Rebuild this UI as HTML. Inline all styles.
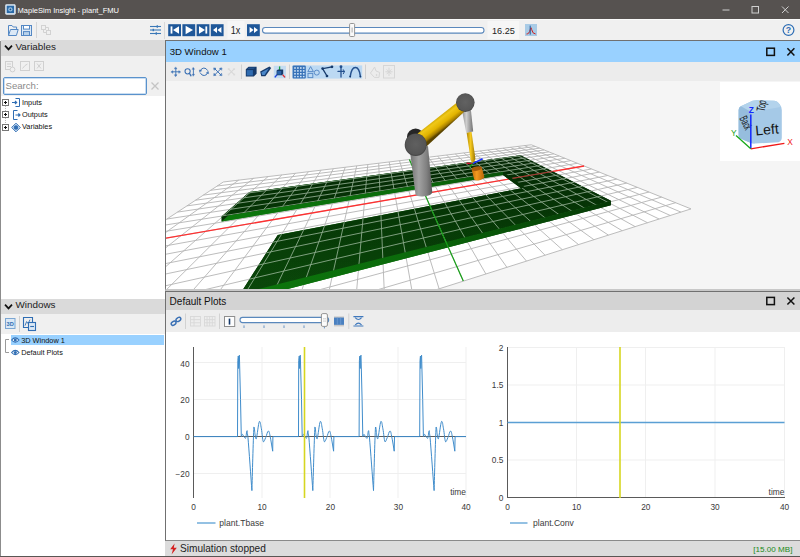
<!DOCTYPE html>
<html><head><meta charset="utf-8"><title>MapleSim Insight - plant_FMU</title>
<style>
html,body{margin:0;padding:0;}
body{width:800px;height:557px;overflow:hidden;background:#f0f0f0;font-family:"Liberation Sans",sans-serif;color:#222;position:relative;}
.abs{position:absolute;}
.t{position:absolute;white-space:nowrap;line-height:1;}
#titlebar{left:0;top:0;width:800px;height:19px;background:#565250;}
#titlebar .t{color:#fff;font-size:7.55px;left:17.5px;top:6.6px;}
#toolbar{left:0;top:19px;width:800px;height:22px;background:#f0f0f0;border-top:1px solid #fafafa;box-sizing:border-box;}
#leftpane{left:0;top:41px;width:165px;height:516px;background:#fff;border-left:1px solid #8c8c8c;box-sizing:border-box;}
.hdr{left:1px;width:164px;height:16px;background:#dadada;}
.hdr .t{font-size:9.9px;left:14.5px;top:1.6px;color:#222;}
.row{left:1px;width:164px;background:#f0f0f0;}
.sep{position:absolute;width:1px;background:#cfcfcf;}
.pb{position:absolute;top:24px;width:13px;height:12px;background:#1e5799;}
.win{box-sizing:border-box;border:1px solid #707070;border-right:none;}
.tree{font-size:7.35px;color:#111;}
</style></head><body>
<!-- title bar -->
<div id="titlebar" class="abs">
<svg class="abs" style="left:5.2px;top:4.2px" width="10.8" height="10.8" viewBox="0 0 13 13"><rect x="0.5" y="0.5" width="12" height="12" rx="1.5" fill="#e8eef4" stroke="#c8d4e0"/><rect x="2" y="2" width="9" height="9" fill="#2a6aa8"/><circle cx="6.5" cy="6.5" r="2.6" fill="#9cc4e4"/><circle cx="6.5" cy="6.5" r="1.1" fill="#1d4f86"/></svg>
<span class="t">MapleSim Insight - plant_FMU</span>
<svg class="abs" style="left:716px;top:0" width="84" height="19" viewBox="716 0 84 19"><g stroke="#cfcfcf" stroke-width="1" fill="none"><line x1="722.5" y1="10" x2="729.5" y2="10"/><rect x="752" y="6.5" width="6.5" height="6.5"/><path d="M782,6.5 L788.5,13 M788.5,6.5 L782,13"/></g></svg>
</div>
<!-- main toolbar -->
<div id="toolbar" class="abs"></div>
<svg class="abs" style="left:0;top:20px" width="165" height="20" viewBox="0 20 165 20">
<g fill="none" stroke="#5488c4" stroke-width="1">
<path d="M8.5,35.5 L8.5,25.5 L12,25.5 L13.2,27 L16.6,27 L16.6,29"/><path d="M8.5,35.5 L10.5,29.5 L18.2,29.5 L16.4,35.5 Z" fill="#dce9f6"/>
<rect x="21.5" y="25.5" width="10" height="10" fill="#dce9f6"/><rect x="23.5" y="25.5" width="6" height="3.6" fill="#fff"/><rect x="23.5" y="31.6" width="6" height="3.9" fill="#b9d2ea"/>
</g>
<line x1="36.5" y1="22" x2="36.5" y2="38" stroke="#d6d6d6"/>
<g fill="none" stroke="#d2d2d2" stroke-width="1"><rect x="41.5" y="25.5" width="4" height="4"/><rect x="46.5" y="30.5" width="4" height="4"/><path d="M45.5,27.5 H48.5 V30.5 M46.5,32.5 H43.5 V29.5"/></g>
<g stroke="#3a78b8" stroke-width="1.1" fill="#3a78b8"><line x1="150" y1="26.5" x2="161" y2="26.5"/><line x1="150" y1="30" x2="161" y2="30"/><line x1="150" y1="33.5" x2="161" y2="33.5"/><rect x="156.6" y="25.3" width="1.4" height="2.4" stroke="none"/><rect x="152.6" y="28.8" width="1.4" height="2.4" stroke="none"/><rect x="155.6" y="32.3" width="1.4" height="2.4" stroke="none"/></g>
</svg>
<div class="sep" style="left:164px;top:22px;height:17px;background:#d8d8d8"></div>
<!-- playback -->
<svg class="abs" style="left:166px;top:20px" width="634" height="20" viewBox="166 20 634 20">
<g fill="#1e5799"><rect x="168.2" y="24.2" width="12.8" height="12"/><rect x="182.4" y="24.2" width="12.8" height="12"/><rect x="196.6" y="24.2" width="12.8" height="12"/><rect x="210.8" y="24.2" width="12.8" height="12"/><rect x="247" y="24.2" width="12.8" height="12"/></g>
<g fill="#fff"><rect x="170.6" y="26.4" width="1.8" height="7.2"/><path d="M179,26.2 L173,30 L179,33.8 Z"/>
<path d="M185.6,25.8 L193,30 L185.6,34.2 Z"/>
<path d="M199,26.2 L205,30 L199,33.8 Z"/><rect x="205.4" y="26.4" width="1.8" height="7.2"/>
<path d="M217,27 L213,30 L217,33 Z M221.4,27 L217.4,30 L221.4,33 Z"/>
<path d="M249.6,27 L253.6,30 L249.6,33 Z M254,27 L258,30 L254,33 Z"/></g>
<rect x="227.5" y="21" width="17" height="18" fill="#f6f6f6"/>
<text x="235.6" y="33.6" font-size="10.2" textLength="9.6" lengthAdjust="spacingAndGlyphs" text-anchor="middle" fill="#222" font-family="Liberation Sans, sans-serif">1x</text>
<rect x="262.5" y="27.5" width="221.5" height="5.6" rx="2.8" fill="#fff" stroke="#5a88bc" stroke-width="1.1"/>
<rect x="349.6" y="23.5" width="5" height="13" rx="1" fill="#fafafa" stroke="#8a8a8a" stroke-width="0.9"/><line x1="352.1" y1="27.5" x2="352.1" y2="32.5" stroke="#9a9a9a" stroke-width="0.8"/>
<rect x="487.5" y="21" width="31.5" height="18" fill="#f6f6f6"/>
<text x="503.4" y="33.5" font-size="9.9" textLength="22.8" lengthAdjust="spacingAndGlyphs" text-anchor="middle" fill="#222" font-family="Liberation Sans, sans-serif">16.25</text>
<rect x="525" y="24" width="12" height="12" fill="#a9cbe6"/><path d="M526.5,34 Q529.4,34 530.3,29.4 Q531,26 531.6,29.4 Q532.6,34 535.6,34" fill="none" stroke="#d02020" stroke-width="1"/><line x1="530.2" y1="25.6" x2="530.2" y2="34.6" stroke="#1e5799" stroke-width="1"/>
<circle cx="788.5" cy="30" r="5.4" fill="none" stroke="#2d6db4" stroke-width="1.2"/>
<text x="788.5" y="33.2" font-size="8.8" font-weight="bold" text-anchor="middle" fill="#2d6db4" font-family="Liberation Sans, sans-serif">?</text>
</svg>

<!-- left pane -->
<div id="leftpane" class="abs"></div>
<div class="abs hdr" style="top:40px"><svg class="abs" style="left:3px;top:4px" width="9" height="8" viewBox="0 0 9 8"><path d="M1,1.6 L4.5,5.4 L8,1.6" fill="none" stroke="#111" stroke-width="1.7"/></svg><span class="t">Variables</span></div>
<div class="abs row" style="top:56px;height:40px"></div>
<svg class="abs" style="left:1px;top:57px" width="164" height="18" viewBox="1 57 164 18"><g fill="none" stroke="#d0d0d0" stroke-width="1"><rect x="5.5" y="61.5" width="7" height="8"/><path d="M7,64 H11 M7,66.5 H11"/><circle cx="12.5" cy="69.5" r="2.4" fill="#f0f0f0"/><rect x="20.5" y="61.5" width="9" height="9"/><path d="M22.5,68.5 L25,65.5 L27.5,64"/><rect x="34.5" y="61.5" width="9" height="9"/><path d="M37,63.5 L41,68.5 M41,63.5 L37,68.5"/></g></svg>
<div class="abs" style="left:3px;top:77px;width:143.5px;height:17.5px;box-sizing:border-box;border:1px solid #5a92cc;border-radius:2px;background:#fff;box-shadow:inset 0 0 0 1px #c9ddf1"></div>
<span class="t" style="left:5.5px;top:81px;font-size:9.6px;color:#8a8a8a">Search:</span>
<svg class="abs" style="left:150px;top:81px" width="10" height="10" viewBox="0 0 10 10"><path d="M1.5,1.5 L8.5,8.5 M8.5,1.5 L1.5,8.5" stroke="#c4c4c4" stroke-width="1.3" fill="none"/></svg>
<!-- tree -->
<svg class="abs" style="left:1px;top:98px" width="60" height="36" viewBox="1 98 60 36">
<path d="M5.5,104 V127" stroke="#bbb" stroke-dasharray="1 1" fill="none"/>
<g fill="#fff" stroke="#777" stroke-width="1"><rect x="2.5" y="99.5" width="6" height="6"/><rect x="2.5" y="111.5" width="6" height="6"/><rect x="2.5" y="124.5" width="6" height="6"/></g>
<g stroke="#111" stroke-width="1" fill="none"><path d="M4,102.5 H7 M5.5,101 V104 M4,114.5 H7 M5.5,113 V116 M4,127.5 H7 M5.5,126 V129"/></g>
<g fill="none" stroke="#2f6db3" stroke-width="1"><path d="M15.5,98.5 H19.5 V106.5 H15.5"/><path d="M12,102.5 H16.5 M15,101 L16.6,102.5 L15,104" stroke-width="1.2"/>
<path d="M17.5,110.5 H13.5 V119.5 H17.5"/><path d="M15.5,115 H20 M18.4,113.5 L20,115 L18.4,116.5" stroke-width="1.2"/>
<path d="M16,123.2 L20.3,127.5 L16,131.8 L11.7,127.5 Z" fill="#d6e6f6"/><circle cx="16" cy="127.5" r="1.8" fill="#2f6db3"/></g>
</svg>
<span class="t tree" style="left:22px;top:98.6px">Inputs</span>
<span class="t tree" style="left:22px;top:111.1px">Outputs</span>
<span class="t tree" style="left:22px;top:123.1px">Variables</span>

<div class="abs hdr" style="top:298.5px;height:15.5px"><svg class="abs" style="left:3px;top:4px" width="9" height="8" viewBox="0 0 9 8"><path d="M1,1.6 L4.5,5.4 L8,1.6" fill="none" stroke="#111" stroke-width="1.7"/></svg><span class="t">Windows</span></div>
<div class="abs row" style="top:314px;height:20px"></div>
<svg class="abs" style="left:1px;top:314px" width="60" height="20" viewBox="1 314 60 20">
<rect x="5.5" y="318.5" width="9.5" height="10" fill="#dbe8f5" stroke="#7ba6d2"/><text x="10.2" y="326" font-size="5.6" font-weight="bold" text-anchor="middle" fill="#2f6db3" font-family="Liberation Sans, sans-serif">3D</text>
<line x1="19.5" y1="316" x2="19.5" y2="332" stroke="#d0d0d0"/>
<g fill="none" stroke="#2f6db3" stroke-width="1.1"><path d="M28.5,327.5 H23.5 V317.5 H32.5 V322"/><path d="M25,325.6 L26.6,321.6 L28.2,323.6 L30,319.6" stroke-width="0.9"/><rect x="28.5" y="322.5" width="7" height="8" fill="#dbe8f5"/><path d="M30.2,326.5 H34"/></g>
</svg>
<div class="abs" style="left:11px;top:335px;width:153px;height:10px;background:#99d1ff"></div>
<svg class="abs" style="left:1px;top:334px" width="22" height="24" viewBox="1 334 22 24">
<path d="M5.5,339.5 H9 M5.5,339.5 V352.5 H9" stroke="#9a9a9a" fill="none"/>
<g fill="#fff" stroke="#2f6db3" stroke-width="1.1"><path d="M11.6,340 Q15.3,335.8 19,340 Q15.3,344.2 11.6,340 Z"/><path d="M11.6,352.5 Q15.3,348.3 19,352.5 Q15.3,356.7 11.6,352.5 Z"/></g>
<circle cx="15.3" cy="340" r="1.5" fill="#2f6db3"/><circle cx="15.3" cy="352.5" r="1.5" fill="#2f6db3"/>
</svg>
<span class="t tree" style="left:21.2px;top:336.6px">3D Window 1</span>
<span class="t tree" style="left:21.2px;top:348.5px">Default Plots</span>

<!-- 3D window -->
<div class="abs win" style="left:165px;top:40px;width:635px;height:251px;background:#f5f5f5;border-bottom:3px solid #c8c8c8"></div>
<div class="abs" style="left:166px;top:41px;width:634px;height:21px;background:#99d1ff"></div>
<span class="t" style="left:169.7px;top:46.7px;font-size:9.6px;color:#111">3D Window 1</span>
<svg class="abs" style="left:760px;top:42px" width="40" height="20" viewBox="760 42 40 20"><rect x="766.8" y="48.2" width="7.6" height="7.2" fill="none" stroke="#111" stroke-width="1.5"/><path d="M787.4,48.2 L794.4,55.4 M794.4,48.2 L787.4,55.4" stroke="#111" stroke-width="1.5" fill="none"/></svg>
<div class="abs" style="left:166px;top:62px;width:634px;height:19px;background:#ececec"></div>
<svg class="abs" style="left:166px;top:62px" width="240" height="19" viewBox="166 62 240 19">
<g stroke="#3a70b4" stroke-width="1.05" fill="#3a70b4" stroke-linecap="round">
<!-- move -->
<path d="M172.6,71.8 H179 M175.8,68.6 V75" fill="none" stroke-width="0.9"/>
<path d="M175.8,67.2 L176.9,68.8 L174.7,68.8 Z M175.8,76.4 L176.9,74.8 L174.7,74.8 Z M171.2,71.8 L172.8,70.7 L172.8,72.9 Z M180.4,71.8 L178.8,70.7 L178.8,72.9 Z" stroke-width="0.5"/>
<!-- zoom -->
<circle cx="187.6" cy="71.3" r="2.6" fill="none" stroke-width="1.05"/><path d="M189.5,73.4 L191,75.8" fill="none" stroke-width="1.3"/>
<path d="M193.4,69 V74.6" fill="none" stroke-width="0.9"/><path d="M193.4,67.6 L194.5,69.3 L192.3,69.3 Z M193.4,76 L194.5,74.3 L192.3,74.3 Z" stroke-width="0.4"/>
<!-- rotate -->
<path d="M200.4,70.6 A3.8,3.8 0 0 1 207.4,70.2" fill="none" stroke-width="1"/><path d="M207.6,73 A3.8,3.8 0 0 1 200.6,73.4" fill="none" stroke-width="1"/>
<path d="M199.7,72.2 L199.3,69.9 L201.5,70.6 Z M208.3,71.4 L208.7,73.7 L206.5,73 Z" stroke-width="0.4"/>
<!-- fit -->
<path d="M215,69 L220.6,74.6 M220.6,69 L215,74.6" fill="none" stroke-width="0.95"/>
<path d="M214,68 L216,68.3 L214.3,70 Z M221.6,68 L219.6,68.3 L221.3,70 Z M214,75.6 L216,75.3 L214.3,73.6 Z M221.6,75.6 L219.6,75.3 L221.3,73.6 Z" stroke-width="0.6"/>
</g>
<path d="M228.8,69.2 L234,74.4 M234,69.2 L228.8,74.4" stroke="#d8d8d8" stroke-width="1.1" fill="none"/>
<path d="M228,68.4 l1.5,0.2 l-1.3,1.3 Z M234.8,68.4 l-1.5,0.2 l1.3,1.3 Z M228,75.2 l1.5,-0.2 l-1.3,-1.3 Z M234.8,75.2 l-1.5,-0.2 l1.3,-1.3 Z" fill="#d8d8d8" stroke="#d8d8d8" stroke-width="0.5"/>
<line x1="241.5" y1="64.5" x2="241.5" y2="79" stroke="#d0d0d0"/>
<!-- cube -->
<path d="M245.8,69.2 L248.6,66.8 L256.6,66.8 L256.6,73.8 L253.8,76.4 L245.8,76.4 Z" fill="#163a6b"/>
<rect x="246.7" y="70.1" width="6.2" height="5.4" fill="#2f6bb0"/>
<path d="M247.2,69 L249.2,67.6 L255.4,67.6 L253.6,69 Z" fill="#24528c"/>
<!-- wedge -->
<path d="M260.2,71.4 L269.4,66.6 L271.2,68 L265.4,76.2 L261.2,76.2 Z" fill="#163a6b"/>
<path d="M261.4,72.2 L268.8,68.4 L264.6,75 L262.2,75 Z" fill="#4a86c8"/>
<!-- axes -->
<rect x="273.8" y="65.8" width="12.2" height="12.4" fill="#c4dcf2"/>
<path d="M279.6,70 V66.4" stroke="#18a040" stroke-width="1.3"/><path d="M282.6,74.6 L285,77.4" stroke="#e02828" stroke-width="1.4"/><path d="M277,74.6 L274.8,77.4" stroke="#2040e0" stroke-width="1.4"/>
<path d="M276.6,70.4 L278,69.4 L283.2,69.4 L283.2,74 L281.8,75.2 L276.6,75.2 Z" fill="#163a6b"/><rect x="277.2" y="71" width="4" height="3.6" fill="#2a62a8"/>
<line x1="289.5" y1="64.5" x2="289.5" y2="79" stroke="#d0d0d0"/>
<!-- checked group -->
<rect x="292.4" y="65.4" width="69.8" height="13.2" fill="#bcd9f3"/>
<rect x="292.6" y="65.6" width="13.2" height="12.8" rx="1" fill="#3872b8"/>
<g fill="#cfe3f6"><rect x="294.2" y="67.2" width="1.6" height="1.6"/><rect x="297.1" y="67.2" width="1.6" height="1.6"/><rect x="300" y="67.2" width="1.6" height="1.6"/><rect x="302.9" y="67.2" width="1.6" height="1.6"/>
<rect x="294.2" y="70.1" width="1.6" height="1.6"/><rect x="297.1" y="70.1" width="1.6" height="1.6"/><rect x="300" y="70.1" width="1.6" height="1.6"/><rect x="302.9" y="70.1" width="1.6" height="1.6"/>
<rect x="294.2" y="73" width="1.6" height="1.6"/><rect x="297.1" y="73" width="1.6" height="1.6"/><rect x="300" y="73" width="1.6" height="1.6"/><rect x="302.9" y="73" width="1.6" height="1.6"/>
<rect x="294.2" y="75.9" width="1.6" height="1.4"/><rect x="297.1" y="75.9" width="1.6" height="1.4"/><rect x="300" y="75.9" width="1.6" height="1.4"/><rect x="302.9" y="75.9" width="1.6" height="1.4"/></g>
<g fill="none" stroke="#5a8cc8" stroke-width="1"><path d="M310.6,66.6 L313.4,71.6 L307.8,71.6 Z"/><rect x="308" y="73.4" width="4.8" height="4.2"/><circle cx="316.8" cy="72.6" r="2.5"/></g>
<g stroke="#163a6b" stroke-width="1.3" fill="#163a6b" stroke-linecap="round"><path d="M332,66.8 L322.6,68.6 L327,76" fill="none"/><circle cx="332" cy="66.8" r="0.7"/><circle cx="322.6" cy="68.6" r="0.7"/><circle cx="327" cy="76" r="0.7"/></g>
<g stroke="#24508e" stroke-width="1.3" fill="none" stroke-linecap="round"><path d="M341,66.6 V77"/><path d="M338,71.4 H344.2"/><path d="M343.4,69.6 Q345.8,71.6 343.4,73.8" stroke-width="1"/><circle cx="341" cy="66.8" r="0.8" fill="#24508e"/></g>
<path d="M350.2,76.6 Q351.4,67.4 355.4,67.4 Q359.4,67.4 360.4,76.6" fill="none" stroke="#24508e" stroke-width="1.5" stroke-linecap="round"/><circle cx="350.2" cy="76.6" r="0.9" fill="#163a6b"/><circle cx="360.4" cy="76.6" r="0.9" fill="#163a6b"/>
<line x1="365.5" y1="64.5" x2="365.5" y2="79" stroke="#d0d0d0"/>
<g fill="none" stroke="#d6d6d6" stroke-width="1"><path d="M372,71 L374.6,67 L376,71 L379.6,72.4 L379,77.4 L374.4,77.4 L370.4,73 Z"/><circle cx="376.6" cy="75" r="0.5"/>
<rect x="383.5" y="65.5" width="11" height="12.5"/><path d="M385.4,71.8 H392.6 M389,67.6 V76 M386.6,69.4 L391.4,74.2 M391.4,69.4 L386.6,74.2"/></g>
</svg>
<svg class="abs" style="left:166px;top:81px" width="634" height="208" viewBox="166 81 634 208">
<defs>
<linearGradient id="gtop" gradientUnits="userSpaceOnUse" x1="0" y1="150" x2="0" y2="290"><stop offset="0" stop-color="#052605"/><stop offset="0.5" stop-color="#083a08"/><stop offset="1" stop-color="#0a480a"/></linearGradient>
<linearGradient id="gfront" gradientUnits="userSpaceOnUse" x1="166" y1="0" x2="620" y2="0"><stop offset="0" stop-color="#0d7c0d"/><stop offset="0.55" stop-color="#0b6a0b"/><stop offset="1" stop-color="#063606"/></linearGradient>
<linearGradient id="gry1" x1="0" y1="0" x2="1" y2="0"><stop offset="0" stop-color="#707070"/><stop offset="0.4" stop-color="#a2a2a2"/><stop offset="0.75" stop-color="#808080"/><stop offset="1" stop-color="#5a5a5a"/></linearGradient>
<linearGradient id="gry2" x1="0" y1="0" x2="1" y2="0"><stop offset="0" stop-color="#8a8a8a"/><stop offset="0.4" stop-color="#cfcfcf"/><stop offset="1" stop-color="#707070"/></linearGradient>
<linearGradient id="yel1" gradientUnits="userSpaceOnUse" x1="437" y1="116.8" x2="445.6" y2="128.2"><stop offset="0" stop-color="#c8a000"/><stop offset="0.25" stop-color="#f0c818"/><stop offset="0.6" stop-color="#e2b400"/><stop offset="0.85" stop-color="#a88000"/><stop offset="1" stop-color="#5a4400"/></linearGradient>
<linearGradient id="yel2" x1="0" y1="0" x2="1" y2="0"><stop offset="0" stop-color="#b08800"/><stop offset="0.45" stop-color="#f6ca20"/><stop offset="1" stop-color="#9a7400"/></linearGradient>
<linearGradient id="org" x1="0" y1="0" x2="1" y2="0"><stop offset="0" stop-color="#c06c08"/><stop offset="0.4" stop-color="#f29a20"/><stop offset="1" stop-color="#b86408"/></linearGradient>
<radialGradient id="jnt" cx="0.5" cy="0.48" r="0.55"><stop offset="0" stop-color="#606060"/><stop offset="0.8" stop-color="#555555"/><stop offset="1" stop-color="#363636"/></radialGradient>
<radialGradient id="jnt2" cx="0.5" cy="0.48" r="0.55"><stop offset="0" stop-color="#626262"/><stop offset="0.8" stop-color="#575757"/><stop offset="1" stop-color="#383838"/></radialGradient>
<clipPath id="clipTop"><polygon points="249.5,192.1 520.5,155.3 610.9,200.7 240.4,293.6 277.7,235.0 525.4,187.5 503.0,171.8 221.6,216.5"/></clipPath>
</defs>
<rect x="166" y="81" width="634" height="208" fill="#f5f5f5"/>
<polygon points="223.3,182.0 531.3,144.8 691.0,208.9 -292.8,521.0" fill="#ffffff"/><g stroke="#b4b4b4" stroke-width="0.9" opacity="1"><line x1="223.3" y1="182.0" x2="-292.8" y2="521.0"/><line x1="238.7" y1="180.1" x2="-191.7" y2="488.9"/><line x1="253.6" y1="178.3" x2="-104.2" y2="461.2"/><line x1="268.0" y1="176.6" x2="-27.6" y2="436.9"/><line x1="281.9" y1="174.9" x2="39.9" y2="415.5"/><line x1="295.4" y1="173.3" x2="99.9" y2="396.4"/><line x1="308.4" y1="171.7" x2="153.5" y2="379.4"/><line x1="321.0" y1="170.2" x2="201.8" y2="364.1"/><line x1="333.3" y1="168.7" x2="245.4" y2="350.3"/><line x1="345.2" y1="167.3" x2="285.0" y2="337.7"/><line x1="356.7" y1="165.9" x2="321.2" y2="326.2"/><line x1="367.8" y1="164.6" x2="354.4" y2="315.7"/><line x1="378.7" y1="163.2" x2="384.9" y2="306.0"/><line x1="389.2" y1="162.0" x2="413.1" y2="297.1"/><line x1="399.5" y1="160.7" x2="439.1" y2="288.8"/><line x1="409.4" y1="159.5" x2="463.3" y2="281.1"/><line x1="419.1" y1="158.4" x2="485.9" y2="274.0"/><line x1="428.5" y1="157.2" x2="506.9" y2="267.3"/><line x1="437.7" y1="156.1" x2="526.5" y2="261.1"/><line x1="446.6" y1="155.0" x2="545.0" y2="255.2"/><line x1="455.3" y1="154.0" x2="562.3" y2="249.7"/><line x1="463.8" y1="153.0" x2="578.6" y2="244.6"/><line x1="472.0" y1="152.0" x2="593.9" y2="239.7"/><line x1="480.1" y1="151.0" x2="608.4" y2="235.1"/><line x1="487.9" y1="150.1" x2="622.1" y2="230.7"/><line x1="495.6" y1="149.1" x2="635.1" y2="226.6"/><line x1="503.1" y1="148.2" x2="647.4" y2="222.7"/><line x1="510.4" y1="147.4" x2="659.1" y2="219.0"/><line x1="517.5" y1="146.5" x2="670.3" y2="215.5"/><line x1="524.5" y1="145.7" x2="680.9" y2="212.1"/><line x1="531.3" y1="144.8" x2="691.0" y2="208.9"/><line x1="223.3" y1="182.0" x2="531.3" y2="144.8"/><line x1="217.2" y1="186.0" x2="535.3" y2="146.5"/><line x1="210.6" y1="190.3" x2="539.6" y2="148.2"/><line x1="203.4" y1="195.1" x2="544.1" y2="150.0"/><line x1="195.5" y1="200.2" x2="548.8" y2="151.9"/><line x1="186.9" y1="205.9" x2="553.8" y2="153.9"/><line x1="177.5" y1="212.1" x2="559.2" y2="156.0"/><line x1="167.0" y1="219.0" x2="564.8" y2="158.3"/><line x1="155.4" y1="226.6" x2="570.8" y2="160.7"/><line x1="142.4" y1="235.2" x2="577.3" y2="163.3"/><line x1="127.7" y1="244.8" x2="584.1" y2="166.0"/><line x1="111.1" y1="255.7" x2="591.4" y2="169.0"/><line x1="92.1" y1="268.2" x2="599.3" y2="172.1"/><line x1="70.1" y1="282.6" x2="607.7" y2="175.5"/><line x1="44.4" y1="299.5" x2="616.8" y2="179.1"/><line x1="14.0" y1="319.5" x2="626.7" y2="183.1"/><line x1="-22.5" y1="343.5" x2="637.3" y2="187.4"/><line x1="-67.3" y1="372.9" x2="649.0" y2="192.0"/><line x1="-123.4" y1="409.7" x2="661.7" y2="197.1"/><line x1="-195.8" y1="457.3" x2="675.6" y2="202.7"/><line x1="-292.8" y1="521.0" x2="691.0" y2="208.9"/></g><line x1="127.7" y1="244.8" x2="584.1" y2="166.0" stroke="#ff3030" stroke-width="1.3"/><polygon points="249.5,196.2 520.5,158.0 610.9,205.2 240.4,301.3 277.7,240.7 525.4,191.5 503.0,175.1 221.6,221.4" fill="url(#gfront)"/><polygon points="249.5,196.2 520.5,158.0 520.5,155.3 249.5,192.1" fill="url(#gfront)"/><polygon points="520.5,158.0 610.9,205.2 610.9,200.7 520.5,155.3" fill="#063006"/><polygon points="610.9,205.2 240.4,301.3 240.4,293.6 610.9,200.7" fill="url(#gfront)"/><polygon points="240.4,301.3 277.7,240.7 277.7,235.0 240.4,293.6" fill="#063006"/><polygon points="277.7,240.7 525.4,191.5 525.4,187.5 277.7,235.0" fill="url(#gfront)"/><polygon points="525.4,191.5 503.0,175.1 503.0,171.8 525.4,187.5" fill="#063006"/><polygon points="503.0,175.1 221.6,221.4 221.6,216.5 503.0,171.8" fill="url(#gfront)"/><polygon points="221.6,221.4 249.5,196.2 249.5,192.1 221.6,216.5" fill="#063006"/><polygon points="249.5,192.1 520.5,155.3 610.9,200.7 240.4,293.6 277.7,235.0 525.4,187.5 503.0,171.8 221.6,216.5" fill="url(#gtop)"/><g clip-path="url(#clipTop)"><g stroke="#c4d8c4" stroke-width="0.9" opacity="0.7"><line x1="223.3" y1="182.0" x2="-292.8" y2="521.0"/><line x1="238.7" y1="180.1" x2="-191.7" y2="488.9"/><line x1="253.6" y1="178.3" x2="-104.2" y2="461.2"/><line x1="268.0" y1="176.6" x2="-27.6" y2="436.9"/><line x1="281.9" y1="174.9" x2="39.9" y2="415.5"/><line x1="295.4" y1="173.3" x2="99.9" y2="396.4"/><line x1="308.4" y1="171.7" x2="153.5" y2="379.4"/><line x1="321.0" y1="170.2" x2="201.8" y2="364.1"/><line x1="333.3" y1="168.7" x2="245.4" y2="350.3"/><line x1="345.2" y1="167.3" x2="285.0" y2="337.7"/><line x1="356.7" y1="165.9" x2="321.2" y2="326.2"/><line x1="367.8" y1="164.6" x2="354.4" y2="315.7"/><line x1="378.7" y1="163.2" x2="384.9" y2="306.0"/><line x1="389.2" y1="162.0" x2="413.1" y2="297.1"/><line x1="399.5" y1="160.7" x2="439.1" y2="288.8"/><line x1="409.4" y1="159.5" x2="463.3" y2="281.1"/><line x1="419.1" y1="158.4" x2="485.9" y2="274.0"/><line x1="428.5" y1="157.2" x2="506.9" y2="267.3"/><line x1="437.7" y1="156.1" x2="526.5" y2="261.1"/><line x1="446.6" y1="155.0" x2="545.0" y2="255.2"/><line x1="455.3" y1="154.0" x2="562.3" y2="249.7"/><line x1="463.8" y1="153.0" x2="578.6" y2="244.6"/><line x1="472.0" y1="152.0" x2="593.9" y2="239.7"/><line x1="480.1" y1="151.0" x2="608.4" y2="235.1"/><line x1="487.9" y1="150.1" x2="622.1" y2="230.7"/><line x1="495.6" y1="149.1" x2="635.1" y2="226.6"/><line x1="503.1" y1="148.2" x2="647.4" y2="222.7"/><line x1="510.4" y1="147.4" x2="659.1" y2="219.0"/><line x1="517.5" y1="146.5" x2="670.3" y2="215.5"/><line x1="524.5" y1="145.7" x2="680.9" y2="212.1"/><line x1="531.3" y1="144.8" x2="691.0" y2="208.9"/><line x1="223.3" y1="182.0" x2="531.3" y2="144.8"/><line x1="217.2" y1="186.0" x2="535.3" y2="146.5"/><line x1="210.6" y1="190.3" x2="539.6" y2="148.2"/><line x1="203.4" y1="195.1" x2="544.1" y2="150.0"/><line x1="195.5" y1="200.2" x2="548.8" y2="151.9"/><line x1="186.9" y1="205.9" x2="553.8" y2="153.9"/><line x1="177.5" y1="212.1" x2="559.2" y2="156.0"/><line x1="167.0" y1="219.0" x2="564.8" y2="158.3"/><line x1="155.4" y1="226.6" x2="570.8" y2="160.7"/><line x1="142.4" y1="235.2" x2="577.3" y2="163.3"/><line x1="127.7" y1="244.8" x2="584.1" y2="166.0"/><line x1="111.1" y1="255.7" x2="591.4" y2="169.0"/><line x1="92.1" y1="268.2" x2="599.3" y2="172.1"/><line x1="70.1" y1="282.6" x2="607.7" y2="175.5"/><line x1="44.4" y1="299.5" x2="616.8" y2="179.1"/><line x1="14.0" y1="319.5" x2="626.7" y2="183.1"/><line x1="-22.5" y1="343.5" x2="637.3" y2="187.4"/><line x1="-67.3" y1="372.9" x2="649.0" y2="192.0"/><line x1="-123.4" y1="409.7" x2="661.7" y2="197.1"/><line x1="-195.8" y1="457.3" x2="675.6" y2="202.7"/><line x1="-292.8" y1="521.0" x2="691.0" y2="208.9"/></g></g><line x1="127.7" y1="244.8" x2="584.1" y2="166.0" stroke="#b01818" stroke-width="1.2" opacity="0.75" clip-path="url(#clipTop)"/><line x1="409.4" y1="159.5" x2="463.3" y2="281.1" stroke="#18a018" stroke-width="1.2"/>

<!-- forearm thin yellow rod -->
<polygon points="466.6,132.6 471.5,131.8 475.4,158.6 473.4,164 470.9,161" fill="url(#yel2)"/>
<!-- orange tool -->
<path d="M471.6,169.6 L481.8,167.6 L484.3,176.6 A5.4,2.4 -12 0 1 474.2,179.6 Z" fill="url(#org)"/>
<ellipse cx="476.7" cy="168.6" rx="5.3" ry="2.1" transform="rotate(-11 476.7 168.6)" fill="#a85c0c"/>
<!-- tool frame axes -->
<line x1="472.6" y1="163.6" x2="482.6" y2="158.8" stroke="#1830ff" stroke-width="1.6"/>
<line x1="472.6" y1="163.6" x2="466.6" y2="163.2" stroke="#d01030" stroke-width="1.4"/>
<line x1="472.6" y1="163.6" x2="469.6" y2="167" stroke="#10a010" stroke-width="1.4"/>
<!-- forearm gray cylinder -->
<polygon points="461.8,109 470.6,107 473.2,131.6 466.2,132.8" fill="url(#gry2)"/>
<!-- base cylinder -->
<path d="M409.8,150 L428,146 L432.3,192.6 A8.6,3.4 -6 0 1 415.5,194.6 Z" fill="url(#gry1)"/>
<!-- back disc of shoulder -->
<circle cx="415.6" cy="137" r="8.6" fill="#262626"/>
<!-- upper arm yellow -->
<polygon points="417.6,133.4 457.6,102 464.6,111.4 426.4,146.4" fill="url(#yel1)"/>
<!-- shoulder joint -->
<ellipse cx="415.7" cy="144.8" rx="11" ry="11.3" fill="url(#jnt)"/>
<!-- elbow joint -->
<circle cx="465.3" cy="102.6" r="9.3" fill="url(#jnt2)"/>


<rect x="720" y="82" width="80" height="79" fill="#ffffff"/>
<path d="M738.6,110 Q738.6,107.4 740.8,106.2 L752.6,100.8 Q754.4,100.2 756.6,100.2 L774,100.8 Q777.4,101 779.8,104.6 Q781.8,107 781.8,110 L781.8,137.6 Q781.8,141.4 778.4,142.2 L755,143.6 Q752.4,143.8 750.4,142.8 L740.4,138.6 Q738.6,137.8 738.6,135.4 Z" fill="#a5c9e7"/>
<path d="M740.8,106.2 L752.6,100.8 Q754.4,100.2 756.6,100.2 L774,100.8 Q777.4,101 779.8,104.6 L780.6,107 L753,112 Q751.4,112.2 750.2,111.6 Z" fill="#b3d3ec"/>
<path d="M738.6,110 Q738.6,107.4 740.8,106.2 L750.2,111.6 Q751.4,112.2 751.4,114 L751.4,143.2 L740.4,138.6 Q738.6,137.8 738.6,135.4 Z" fill="#96bddd"/>
<text x="0" y="0" font-size="14" text-anchor="middle" fill="#151515" font-family="Liberation Sans, sans-serif" transform="translate(767.4,134.4) rotate(-5)">Left</text>
<text x="0" y="0" font-size="10.5" text-anchor="middle" fill="#151515" font-family="Liberation Sans, sans-serif" transform="translate(742.4,124.6) rotate(64) scale(0.6,1.1)">Back</text>
<text x="0" y="0" font-size="10.5" text-anchor="middle" fill="#151515" font-family="Liberation Sans, sans-serif" transform="translate(765.4,106.4) rotate(-80) scale(0.66,1.15)">Top</text>
<line x1="750.8" y1="148.8" x2="750.8" y2="114.6" stroke="#1428ff" stroke-width="1.5"/>
<line x1="750.8" y1="148.8" x2="784.4" y2="143.4" stroke="#f01818" stroke-width="1.3"/>
<line x1="750.8" y1="148.8" x2="736" y2="135.6" stroke="#18a818" stroke-width="1.3"/>
<text x="751.3" y="112.8" font-size="8.4" font-weight="bold" text-anchor="middle" fill="#1428ff" font-family="Liberation Sans, sans-serif">Z</text>
<text x="790" y="145.4" font-size="8.4" text-anchor="middle" fill="#f02020" font-family="Liberation Sans, sans-serif">X</text>
<text x="733.8" y="136" font-size="8.4" text-anchor="middle" fill="#20a020" font-family="Liberation Sans, sans-serif">Y</text>

</svg>

<!-- plots window -->
<div class="abs win" style="left:165px;top:291px;width:635px;height:250px;background:#fff;border-bottom:1.5px solid #8a8a8a"></div>
<div class="abs" style="left:166px;top:292px;width:634px;height:17.5px;background:#d3d3d3"></div>
<span class="t" style="left:169.6px;top:297.4px;font-size:10px;color:#111">Default Plots</span>
<svg class="abs" style="left:760px;top:292px" width="40" height="18" viewBox="760 292 40 18"><rect x="766.8" y="297.4" width="7.6" height="7.2" fill="none" stroke="#111" stroke-width="1.5"/><path d="M787.4,297.4 L794.4,304.6 M794.4,297.4 L787.4,304.6" stroke="#111" stroke-width="1.5" fill="none"/></svg>
<div class="abs" style="left:166px;top:309.5px;width:634px;height:22.5px;background:#ededed"></div>
<svg class="abs" style="left:166px;top:311px" width="240" height="21" viewBox="166 311 240 21">
<g fill="none" stroke="#3a70b4" stroke-width="1.5"><rect x="-2.6" y="-1.7" width="5.2" height="3.4" rx="1.7" transform="translate(173.6,323.2) rotate(-35)"/><rect x="-2.6" y="-1.7" width="5.2" height="3.4" rx="1.7" transform="translate(178.4,319.4) rotate(-35)"/></g>
<line x1="185.5" y1="313.5" x2="185.5" y2="329" stroke="#d2d2d2"/>
<g fill="none" stroke="#d8d8d8" stroke-width="0.9"><rect x="190.5" y="316.5" width="10" height="9.5"/><path d="M194,316.5 V326 M190.5,319.6 H200.5 M190.5,322.8 H200.5"/>
<rect x="204.5" y="316.5" width="10.5" height="9.5"/><path d="M207.1,316.5 V326 M209.7,316.5 V326 M212.3,316.5 V326 M204.5,319.6 H215 M204.5,322.8 H215"/></g>
<line x1="219.5" y1="313.5" x2="219.5" y2="329" stroke="#d2d2d2"/>
<rect x="224.5" y="316.5" width="10.2" height="10" fill="#fdfdfd" stroke="#8e8e8e" stroke-width="1"/><line x1="229.5" y1="318.6" x2="229.5" y2="324.6" stroke="#163a6b" stroke-width="1.6"/>
<rect x="240" y="317.4" width="88.6" height="5.2" rx="2.6" fill="#fff" stroke="#5a88bc" stroke-width="1.1"/>
<g stroke="#6a94c4" stroke-width="1"><line x1="244" y1="325.4" x2="244" y2="328"/><line x1="264" y1="325.4" x2="264" y2="328"/><line x1="284" y1="325.4" x2="284" y2="328"/><line x1="304" y1="325.4" x2="304" y2="328"/><line x1="324.4" y1="326.6" x2="324.4" y2="328.4"/></g>
<rect x="321.4" y="313.6" width="6" height="12.8" rx="1.4" fill="#fcfcfc" stroke="#8a8a8a" stroke-width="0.9"/><path d="M323.8,318 v4 M325.2,318 v4" stroke="#aaa" stroke-width="0.6" stroke-dasharray="1 0.6"/><path d="M328,318.8 L329.4,320 L328,321.2 Z" fill="#5a88bc"/>
<rect x="334" y="316.4" width="10" height="10" fill="#c9c9c9"/><rect x="334" y="317.6" width="10" height="7.2" fill="#4a80c0"/><path d="M337.3,317.6 V324.8 M340.7,317.6 V324.8" stroke="#6f9cd2" stroke-width="0.8"/>
<line x1="348.8" y1="313.5" x2="348.8" y2="329" stroke="#d2d2d2"/>
<g fill="none" stroke="#3f78bc" stroke-width="1.1"><path d="M353.4,316.6 H363.4 M353.4,326 H363.4"/><path d="M355.2,317.6 Q358.4,321.4 361.6,317.6 M355.2,325 Q358.4,321.2 361.6,325"/></g>
</svg>
<svg class="abs" style="left:166px;top:334px" width="634" height="205" viewBox="166 334 634 205" font-family="Liberation Sans, sans-serif" font-size="8.3" fill="#3a3a3a">
<rect x="166" y="334" width="634" height="205" fill="#fff"/>
<g stroke="#efefef" stroke-width="1">
<line x1="262" y1="347" x2="262" y2="498"/><line x1="330" y1="347" x2="330" y2="498"/><line x1="398" y1="347" x2="398" y2="498"/><line x1="466" y1="347" x2="466" y2="498"/>
<line x1="194" y1="362.5" x2="466" y2="362.5"/><line x1="194" y1="399.5" x2="466" y2="399.5"/><line x1="194" y1="473.5" x2="466" y2="473.5"/>
<line x1="576.5" y1="347" x2="576.5" y2="498"/><line x1="645.5" y1="347" x2="645.5" y2="498"/><line x1="715" y1="347" x2="715" y2="498"/><line x1="784.5" y1="347" x2="784.5" y2="498"/>
<line x1="507" y1="347.5" x2="785" y2="347.5"/><line x1="507" y1="385" x2="785" y2="385"/><line x1="507" y1="422.5" x2="785" y2="422.5"/><line x1="507" y1="460" x2="785" y2="460"/>
</g>
<g stroke="#5a5a5a" stroke-width="1">
<line x1="193.5" y1="347" x2="193.5" y2="498"/><line x1="193" y1="436.5" x2="466" y2="436.5"/>
<line x1="507.5" y1="347" x2="507.5" y2="498"/><line x1="507" y1="497.5" x2="785" y2="497.5"/>
</g>
<path d="M193.6,436.6 L237.5,436.6 L237.8,360.8 L238.2,356.1 L238.5,357.1 L238.6,368.5 L238.8,357.1 L239.4,355.2 L240.5,399.6 L241.3,436.6 C241.5,436.1 241.9,434.4 242.4,434.4 C243.0,434.4 243.2,435.7 243.9,436.6 C244.5,437.5 244.9,438.3 245.6,438.3 C246.2,437.0 246.5,431.0 247.0,430.7 C247.5,430.7 246.8,430.7 247.9,436.6 C249.0,449.8 251.0,478.7 251.9,490.6 C252.3,476.6 253.2,439.3 253.9,427.0 C254.6,427.0 254.6,432.1 255.1,434.8 C255.6,437.4 255.3,438.8 256.3,438.8 C257.2,435.9 258.3,423.6 259.4,421.4 C260.5,421.4 260.5,424.4 261.4,428.8 C262.2,433.3 262.4,439.9 263.4,441.8 C264.4,441.8 264.6,439.9 265.7,437.5 C266.8,435.2 267.3,431.4 268.3,431.1 C269.3,431.1 269.1,431.6 270.1,436.0 C271.0,440.5 272.1,447.9 272.7,451.2 L272.9,436.6 L298.5,436.6 L298.7,360.8 L299.2,356.1 L299.4,357.1 L299.6,368.5 L299.8,357.1 L300.3,355.2 L301.5,399.6 L302.2,436.6 C302.5,436.1 302.8,434.4 303.4,434.4 C303.9,434.4 304.1,435.7 304.8,436.6 C305.5,437.5 305.8,438.3 306.5,438.3 C307.2,437.0 307.4,431.0 307.9,430.7 C308.4,430.7 307.7,430.7 308.8,436.6 C309.9,449.8 312.0,478.7 312.8,490.6 C313.3,476.6 314.2,439.3 314.9,427.0 C315.6,427.0 315.5,432.1 316.0,434.8 C316.6,437.4 316.3,438.8 317.2,438.8 C318.1,435.9 319.2,423.6 320.3,421.4 C321.5,421.4 321.4,424.4 322.3,428.8 C323.2,433.3 323.4,439.9 324.4,441.8 C325.3,441.8 325.6,439.9 326.7,437.5 C327.7,435.2 328.3,431.4 329.3,431.1 C330.2,431.1 330.1,431.6 331.0,436.0 C332.0,440.5 333.0,447.9 333.6,451.2 L333.9,436.6 L359.1,436.6 L359.4,360.8 L359.8,356.1 L360.0,357.1 L360.2,368.5 L360.4,357.1 L361.0,355.2 L362.1,399.6 L362.8,436.6 C363.1,436.1 363.4,434.4 364.0,434.4 C364.6,434.4 364.7,435.7 365.4,436.6 C366.1,437.5 366.4,438.3 367.1,438.3 C367.8,437.0 368.0,431.0 368.5,430.7 C369.1,430.7 368.4,430.7 369.4,436.6 C370.5,449.8 372.6,478.7 373.5,490.6 C373.9,476.6 374.8,439.3 375.5,427.0 C376.2,427.0 376.1,432.1 376.7,434.8 C377.2,437.4 376.9,438.8 377.8,438.8 C378.8,435.9 379.8,423.6 380.9,421.4 C382.1,421.4 382.0,424.4 382.9,428.8 C383.8,433.3 384.0,439.9 385.0,441.8 C385.9,441.8 386.2,439.9 387.3,437.5 C388.4,435.2 388.9,431.4 389.9,431.1 C390.8,431.1 390.7,431.6 391.6,436.0 C392.6,440.5 393.7,447.9 394.2,451.2 L394.5,436.6 L419.7,436.6 L420.0,360.8 L420.4,356.1 L420.6,357.1 L420.8,368.5 L421.0,357.1 L421.6,355.2 L422.7,399.6 L423.4,436.6 C423.7,436.1 424.0,434.4 424.6,434.4 C425.2,434.4 425.3,435.7 426.0,436.6 C426.7,437.5 427.0,438.3 427.7,438.3 C428.4,437.0 428.6,431.0 429.2,430.7 C429.7,430.7 429.0,430.7 430.0,436.6 C431.1,449.8 433.2,478.7 434.1,490.6 C434.5,476.6 435.4,439.3 436.1,427.0 C436.8,427.0 436.8,432.1 437.3,434.8 C437.8,437.4 437.5,438.8 438.4,438.8 C439.4,435.9 440.4,423.6 441.6,421.4 C442.7,421.4 442.6,424.4 443.5,428.8 C444.4,433.3 444.6,439.9 445.6,441.8 C446.5,441.8 446.8,439.9 447.9,437.5 C449.0,435.2 449.5,431.4 450.5,431.1 C451.4,431.1 451.3,431.6 452.2,436.0 C453.2,440.5 454.3,447.9 454.8,451.2 L455.1,436.6 L466.0,436.6" fill="none" stroke="#3f8ccb" stroke-width="1" stroke-linejoin="round"/>
<line x1="507.5" y1="422.5" x2="784.5" y2="422.5" stroke="#5a9fd4" stroke-width="1.3"/>
<line x1="304.5" y1="347" x2="304.5" y2="498" stroke="#d6d620" stroke-width="1.6"/>
<line x1="620" y1="347" x2="620" y2="498" stroke="#d6d620" stroke-width="1.6"/>
<g text-anchor="end">
<text x="189.6" y="366.5">40</text><text x="189.6" y="402.6">20</text><text x="189.6" y="439.5">0</text><text x="189.6" y="476.8">−20</text>
<text x="503.4" y="350.6">2</text><text x="503.4" y="388">1.5</text><text x="503.4" y="425.5">1</text><text x="503.4" y="463">0.5</text><text x="503.4" y="500.5">0</text>
</g>
<g text-anchor="middle">
<text x="193.6" y="510.2">0</text><text x="262" y="510.2">10</text><text x="330.4" y="510.2">20</text><text x="398.4" y="510.2">30</text><text x="466" y="510.2">40</text>
<text x="507.5" y="510.2">0</text><text x="576.5" y="510.2">10</text><text x="645.8" y="510.2">20</text><text x="715" y="510.2">30</text><text x="784.5" y="510.2">40</text>
</g>
<text x="466" y="495.2" text-anchor="end" font-size="8.4">time</text>
<text x="784.4" y="495.2" text-anchor="end" font-size="8.4">time</text>
<line x1="197" y1="523" x2="215.5" y2="523" stroke="#5a9fd4" stroke-width="1.3"/>
<text x="219.3" y="526.4" font-size="8.55">plant.Tbase</text>
<line x1="510" y1="523" x2="527.5" y2="523" stroke="#5a9fd4" stroke-width="1.3"/>
<text x="533" y="526.4" font-size="8.55">plant.Conv</text>
</svg>

<!-- status bar -->
<div class="abs" style="left:165px;top:541px;width:635px;height:16px;background:#dcdcdc"></div>
<div class="abs" style="left:0;top:555.6px;width:800px;height:1.4px;background:#5a5654"></div>
<svg class="abs" style="left:169px;top:543.4px" width="9" height="12" viewBox="0 0 9 12"><path d="M5.6,0.5 L1.2,6.2 L4,6.2 L2.6,11.4 L7.8,4.8 L4.8,4.8 Z" fill="#d42020"/></svg>
<span class="t" style="left:180px;top:544.2px;font-size:10.1px;color:#222">Simulation stopped</span>
<span class="t" style="right:7.5px;top:545.8px;font-size:8.1px;color:#1a8a1a">[15.00 MB]</span>
</body></html>
